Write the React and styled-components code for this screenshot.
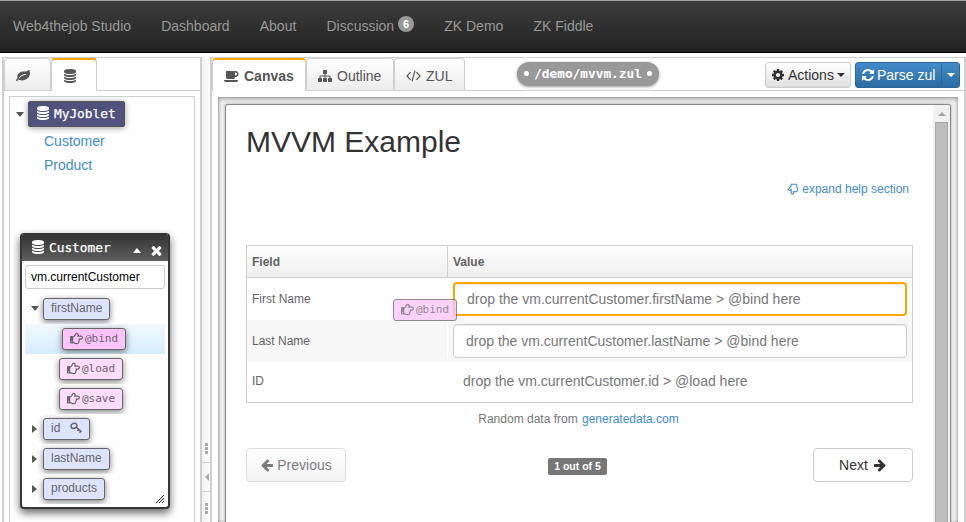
import React from "react";
import styled, { createGlobalStyle, css } from "styled-components";
import { FaRegHandPointRight } from "react-icons/fa";

const sans = `"Liberation Sans", Arial, sans-serif`;
const mono = `"DejaVu Sans Mono", monospace`;

const GlobalStyle = createGlobalStyle`
  *, *::before, *::after { box-sizing: border-box; }
  body { margin: 0; background: #fff; font-family: ${sans}; overflow: hidden; }
  a { color: #428bca; text-decoration: none; }
`;

/* ---------- icons ---------- */
const PATHS = {
  database:
    "M896 768q237 0 443-43t325-127v170q0 69-103 128t-280 93.5-385 34.5-385-34.5-280-93.5-103-128v-170q119 84 325 127t443 43zm0 768q237 0 443-43t325-127v170q0 69-103 128t-280 93.5-385 34.5-385-34.5-280-93.5-103-128v-170q119 84 325 127t443 43zm0-384q237 0 443-43t325-127v170q0 69-103 128t-280 93.5-385 34.5-385-34.5-280-93.5-103-128v-170q119 84 325 127t443 43zm0-1152q208 0 385 34.5t280 93.5 103 128v128q0 69-103 128t-280 93.5-385 34.5-385-34.5-280-93.5-103-128v-128q0-69 103-128t280-93.5 385-34.5z",
  leaf:
    "M1280 704q0-26-19-45t-45-19q-172 0-318 49.5t-259.5 134-235.5 219.5q-19 21-19 45 0 26 19 45t45 19q24 0 45-19 27-24 74-71t67-66q137-124 268.5-176t313.5-52q26 0 45-19t19-45zm512-198q0 95-20 193-46 224-184.5 383t-357.5 268q-214 108-438 108-148 0-286-47-15-5-88-42t-96-37q-16 0-39.5 32t-45 70-52.5 70-60 32q-43 0-63.5-17.5t-45.5-59.5q-2-4-6-11t-5.5-10-3-9.5-1.5-13.5q0-35 31-73.5t68-65.5 68-56 31-48q0-4-14-38t-16-44q-9-51-9-104 0-115 43.5-220t119-184.5 170.5-139 204-95.5q55-18 145-25.5t179.5-9 178.5-6 163.5-24 113.5-56.5l29.5-29.5 29.5-28 27-20 36.5-16 43.5-4.5q39 0 70.5 46t47.5 112 24 124 8 96z",
  coffee:
    "M1664 640q0-80-56-136t-136-56h-64v384h64q80 0 136-56t56-136zm-1664 768h1792q0 106-75 181t-181 75h-1280q-106 0-181-75t-75-181zm1856-768q0 159-112.5 271.5t-271.5 112.5h-64v32q0 92-66 158t-158 66h-704q-92 0-158-66t-66-158v-736q0-26 19-45t45-19h1152q159 0 271.5 112.5t112.5 271.5z",
  left:
    "M1664 896v128q0 53-32.5 90.5t-84.5 37.5h-704l293 294q38 36 38 90t-38 90l-75 76q-37 37-90 37-52 0-91-37l-651-652q-37-37-37-90 0-52 37-91l651-650q38-38 91-38 52 0 90 38l75 74q38 38 38 91t-38 91l-293 293h704q52 0 84.5 37.5t32.5 90.5z",
  right:
    "M1600 960q0 54-37 91l-651 651q-39 37-91 37-51 0-90-37l-75-75q-38-38-38-91t38-91l293-293h-704q-52 0-84.5-37.5t-32.5-90.5v-128q0-53 32.5-90.5t84.5-37.5h704l-293-294q-38-36-38-90t38-90l75-75q38-38 90-38 53 0 91 38l651 651q37 35 37 90z",
  refresh:
    "M1639 1056q0 5-1 7-64 268-268 434.5t-478 166.5q-146 0-282.5-55t-243.5-157l-129 129q-19 19-45 19t-45-19-19-45v-448q0-26 19-45t45-19h448q26 0 45 19t19 45-19 45l-137 137q71 66 161 102t187 36q134 0 250-65t186-179q11-17 53-117 8-23 30-23h192q13 0 22.5 9.5t9.5 22.5zm25-800v448q0 26-19 45t-45 19h-448q-26 0-45-19t-19-45 19-45l138-138q-148-137-349-137-134 0-250 65t-186 179q-11 17-53 117-8 23-30 23h-199q-13 0-22.5-9.5t-9.5-22.5v-7q65-268 270-434.5t480-166.5q146 0 284 55.5t245 156.5l130-129q19-19 45-19t45 19 19 45z",
  times:
    "M1490 1322q0 40-28 68l-136 136q-28 28-68 28t-68-28l-294-294-294 294q-28 28-68 28t-68-28l-136-136q-28-28-28-68t28-68l294-294-294-294q-28-28-28-68t28-68l136-136q28-28 68-28t68 28l294 294 294-294q28-28 68-28t68 28l136 136q28 28 28 68t-28 68l-294 294 294 294q28 28 28 68z",
  cog:
    "M1152 896q0-106-75-181t-181-75-181 75-75 181 75 181 181 75 181-75 75-181zm512-109v222q0 12-8 23t-20 13l-185 28q-19 54-39 91 35 50 107 138 10 12 10 25t-9 23q-27 37-99 108t-94 71q-12 0-26-9l-138-108q-44 23-91 38-16 136-29 186-7 28-36 28h-222q-14 0-24.5-8.5t-11.5-21.5l-28-184q-49-16-90-37l-141 107q-10 9-25 9-14 0-25-11-126-114-165-168-7-10-7-23 0-12 8-23 15-21 51-66.5t54-70.5q-27-50-41-99l-183-27q-13-2-21-12.5t-8-23.5v-222q0-12 8-23t19-13l186-28q14-46 39-92-40-57-107-138-10-12-10-24 0-10 9-23 26-36 98.5-107.5t94.5-71.5q13 0 26 10l138 107q44-23 91-38 16-136 29-186 7-28 36-28h222q14 0 24.5 8.5t11.5 21.5l28 184q49 16 90 37l142-107q9-9 24-9 13 0 25 10 129 119 165 170 7 8 7 22 0 12-8 23-15 21-51 66.5t-54 70.5q26 50 41 98l183 28q13 2 21 12.5t8 23.5z",
  sitemap:
    "M1792 1248v320q0 40-28 68t-68 28h-320q-40 0-68-28t-28-68v-320q0-40 28-68t68-28h96v-192h-512v192h96q40 0 68 28t28 68v320q0 40-28 68t-68 28h-320q-40 0-68-28t-28-68v-320q0-40 28-68t68-28h96v-192h-512v192h96q40 0 68 28t28 68v320q0 40-28 68t-68 28h-320q-40 0-68-28t-28-68v-320q0-40 28-68t68-28h96v-192q0-52 38-90t90-38h512v-192h-96q-40 0-68-28t-28-68v-320q0-40 28-68t68-28h320q40 0 68 28t28 68v320q0 40-28 68t-68 28h-96v192h512q52 0 90 38t38 90v192h96q40 0 68 28t28 68z",
};

const Svg = styled.svg`
  display: block;
  flex: none;
`;
const Icon = ({ name, size = 14, box = 1792 }) => (
  <Svg width={(size * box) / 1792} height={size} viewBox={`0 0 ${box} 1792`} fill="currentColor">
    <path d={PATHS[name]} />
  </Svg>
);
const CodeIcon = () => (
  <Svg width="15" height="14" viewBox="0 0 15 14" fill="none" stroke="currentColor" strokeWidth="1.2">
    <path d="M4.6 3.2 1 7l3.6 3.8M10.4 3.2 14 7l-3.6 3.8M9 1.6 6 12.4" />
  </Svg>
);
const KeyIcon = () => (
  <Svg width="13" height="12" viewBox="0 0 13 12" fill="none" stroke="currentColor" strokeWidth="1.5">
    <ellipse cx="4" cy="3.8" rx="3" ry="2.4" transform="rotate(-25 4 3.8)" />
    <path d="M6.4 5.2 11.6 9.8M8.8 7.2 7.6 9.2M10.8 8.8 9.6 10.8" />
  </Svg>
);
const HelpHand = () => (
  <Svg width="12" height="12" viewBox="0 0 12 12" fill="none" stroke="currentColor" strokeWidth="1.1">
    <path d="M4 1.2h6M4 1.5v2L1.2 6.2l1 1.2 2-1v4l1.4.8 1-.8V8.6l3 .2 1.2-1.6L9.8 4V1.5" />
  </Svg>
);

const Caret = styled.span`
  flex: none;
  width: 0;
  height: 0;
  ${({ $dir = "down", $tall = 4 }) =>
    $dir === "down"
      ? css`border: 4px solid transparent; border-bottom: 0; border-top: ${$tall}px solid currentColor;`
      : $dir === "up"
      ? css`border: 4px solid transparent; border-top: 0; border-bottom: ${$tall}px solid currentColor;`
      : $dir === "right"
      ? css`border: 4px solid transparent; border-right: 0; border-left: 5px solid currentColor;`
      : css`border: 4px solid transparent; border-left: 0; border-right-color: currentColor;`}
`;

/* ---------- frame ---------- */
const Page = styled.div`
  width: 966px;
  height: 522px;
  overflow: hidden;
  display: flex;
  flex-direction: column;
`;
const Navbar = styled.nav`
  flex: none;
  height: 53px;
  border-top: 1px solid #a2a2a2;
  border-bottom: 1px solid #000;
  background: linear-gradient(#3c3c3c, #222);
  display: flex;
  align-items: center;
  gap: 30.1px;
  padding: 0 13px 2px;
  color: #999;
  font-size: 14px;
`;
const NavItem = styled.span`
  display: flex;
  gap: 4px;
  line-height: 20px;
`;
const Badge = styled.span`
  height: 16px;
  width: 16px;
  border-radius: 8px;
  background: #999;
  color: #fff;
  font: bold 11px/16px ${sans};
  text-align: center;
`;
const Workspace = styled.div`
  flex: 1;
  min-height: 0;
  display: flex;
  padding: 4px 0 0 2px;
`;
const Pane = styled.section`
  flex: ${({ $w }) => ($w ? `0 0 ${$w}px` : "1")};
  display: flex;
  flex-direction: column;
  min-width: 0;
  border: solid #cfcfcf;
  border-width: 1px 2px 0;
`;
const TabBar = styled.header`
  flex: none;
  height: 33px;
  display: flex;
  border-bottom: 1px solid #cfcfcf;
`;
const Tab = styled.div`
  width: ${({ $w }) => $w}px;
  height: ${({ $on }) => ($on ? 33 : 32)}px;
  border: 1px solid #cfcfcf;
  border-bottom: 0;
  border-radius: 4px 4px 0 0;
  background: linear-gradient(#fefefe, #ececec);
  color: #555;
  font-size: 14px;
  display: flex;
  align-items: center;
  padding: 3px 0 0 ${({ $pl = 11 }) => $pl}px;
  gap: 5px;
  ${({ $on }) => $on && css`
    background: #fff;
    border-top: 2px solid #ffa500;
    padding-top: 1px;
    font-weight: bold;
  `}
`;

/* ---------- left pane ---------- */
const TreeBox = styled.div`
  flex: 1;
  margin: 5px 5px 0 5px;
  border: 1px solid #cfcfcf;
  border-bottom: 0;
  font-size: 14px;
`;
const Root = styled.div`
  display: flex;
  align-items: center;
  gap: 4px;
  padding: 4px 0 0 6px;
  color: #555;
`;
const RootChip = styled.span`
  display: flex;
  align-items: center;
  gap: 4px;
  width: 97px;
  height: 26px;
  padding: 0 0 2px 7px;
  border: 1px solid #555;
  border-radius: 2px;
  background: #50527e;
  box-shadow: 0 1px 6px rgba(0, 0, 0, 0.4);
  color: #fff;
  font: 12.8px ${mono};
  -webkit-text-stroke: 0.25px;
`;
const Leaf = styled.a`
  display: block;
  height: 24px;
  line-height: 24px;
  padding-left: 34px;
`;
const Leaves = styled.div`
  padding-top: 2px;
`;

/* ---------- splitter ---------- */
const Splitter = styled.div`
  flex: 0 0 8px;
  display: flex;
  flex-direction: column;
  justify-content: flex-end;
  align-items: center;
  background: linear-gradient(90deg, #f1f1f1, #fdfdfd);
  color: #aaa;
`;
const Grip = styled.span`
  display: grid;
  gap: 1px;
  margin: ${({ $m }) => $m};
  i { width: 3px; height: 3px; background: #aaa; }
`;
const Collapse = styled.span`
  width: 8px;
  height: 30px;
  border: solid #cfcfcf;
  border-width: 1px 0;
  display: flex;
  align-items: center;
  justify-content: flex-end;
  padding-right: 1px;
`;

/* ---------- right pane ---------- */
const PathPill = styled.span`
  width: 142px;
  height: 24px;
  margin: 4px 0 0 52px;
  padding-bottom: 1px;
  border-radius: 12px;
  background: #999;
  box-shadow: 0 1px 3px rgba(0, 0, 0, 0.4);
  color: #fff;
  font: bold 12.8px ${mono};
  display: flex;
  align-items: center;
  justify-content: center;
  gap: 5px;
  &::before, &::after { content: ""; width: 5px; height: 5px; border-radius: 50%; background: #fff; }
`;
const Actions = styled.div`
  margin: 4px 4px 0 auto;
  display: flex;
  gap: 4px;
`;
const ToolButton = styled.button`
  display: flex;
  align-items: center;
  gap: ${({ $gap = 3 }) => $gap}px;
  width: ${({ $w }) => $w}px;
  height: 26px;
  padding: 0 0 0 5px;
  font: 14px ${sans};
  white-space: nowrap;
  border: 1px solid #ccc;
  border-radius: 3px;
  background: linear-gradient(#fff, #e0e0e0);
  color: #333;
  ${({ $primary }) => $primary && css`
    border-color: #2b669a;
    border-radius: 3px 0 0 3px;
    background: linear-gradient(#428bca, #2d6ca2);
    color: #fff;
  `}
`;
const SplitToggle = styled(ToolButton)`
  margin-left: -5px;
  border-radius: 0 3px 3px 0;
`;
const Well = styled.div`
  flex: 1;
  min-height: 0;
  margin: 6px 6px 0 6px;
  padding: 7px 7px 0;
  background: #efefef;
  box-shadow: inset 0 2px 4px rgba(0, 0, 0, 0.3), inset 1px 0 2px rgba(0, 0, 0, 0.2), inset -1px 0 2px rgba(0, 0, 0, 0.12);
  display: flex;
`;
const Sheet = styled.div`
  flex: 1;
  display: flex;
  border: 1px solid #888;
  border-bottom: 0;
  border-radius: 3px 3px 0 0;
  box-shadow: 0 0 3px rgba(0, 0, 0, 0.3);
  background: #fff;
  overflow: hidden;
`;
const Content = styled.main`
  flex: 1;
  padding: 17px 20px 0;
`;
const Title = styled.h1`
  margin: 0;
  height: 40px;
  font: 30px/40px ${sans};
  color: #333;
`;
const HelpLink = styled.a`
  display: flex;
  justify-content: flex-end;
  align-items: center;
  gap: 3px;
  height: 18px;
  margin: 18px 4px 47px 0;
  font-size: 12px;
`;
const Scrollbar = styled.div`
  flex: 0 0 17px;
  display: flex;
  flex-direction: column;
  align-items: center;
  background: #f1f1f1;
  color: #a3a3a3;
  padding-top: 7px;
`;
const Thumb = styled.span`
  flex: 1;
  width: 13px;
  margin: 6px 1px 0 0;
  border: 1px solid #a8a8a8;
  border-bottom: 0;
  background: #bcbcbc;
`;

const Table = styled.div`
  border: 1px solid #cfcfcf;
  font-size: 12px;
  color: #636363;
`;
const Row = styled.div`
  display: grid;
  grid-template-columns: 200px 1fr;
  align-items: center;
  height: ${({ $h = 42 }) => $h}px;
  padding-bottom: ${({ $pb = 0 }) => $pb}px;
  background: ${({ $alt }) => ($alt ? "#f7f7f7" : "#fff")};
  > * { padding-left: 5px; }
  > * + * { border-left: 1px solid #fff; }
`;
const HeadRow = styled(Row)`
  background: linear-gradient(#fefefe, #eee);
  border-bottom: 1px solid #cfcfcf;
  font-weight: bold;
  align-items: stretch;
  line-height: 32px;
  > * + * { border-left-color: #cfcfcf; }
`;
const Cell = styled.div``;
const Field = styled.div`
  margin-right: 5px;
  height: 34px;
  border: 1px solid #ccc;
  border-radius: 4px;
  background: #fff;
  box-shadow: inset 0 1px 1px rgba(0, 0, 0, 0.075);
  padding-left: 12px;
  font-size: 14px;
  line-height: 32px;
  color: #777;
  ${({ $target }) => $target && css`border: 2px solid #ffa500; line-height: 30px;`}
`;
const Plain = styled.span`
  padding-left: 10px;
  font-size: 14px;
  color: #777;
`;
const Credit = styled.p`
  margin: 7px 2px 20px 0;
  text-align: center;
  font-size: 12px;
  line-height: 18px;
  color: #777;
  a { margin-left: 1px; }
`;
const Pager = styled.footer`
  display: flex;
  align-items: center;
  justify-content: space-between;
`;
const PageButton = styled.button`
  display: flex;
  align-items: center;
  justify-content: center;
  gap: ${({ $off }) => ($off ? 3 : 5)}px;
  width: 100px;
  height: 34px;
  border: 1px solid #ccc;
  border-radius: 4px;
  background: #fff;
  font: 14px ${sans};
  color: #333;
  ${({ $off }) => $off && css`
    opacity: 0.65;
    background: linear-gradient(#fff, #eee);
  `}
`;
const PageLabel = styled.span`
  width: 59px;
  height: 17px;
  margin: 2px 4px 0 0;
  border-radius: 2px;
  background: #777;
  color: #fff;
  font: bold 10.5px/17px ${sans};
  text-align: center;
`;

/* ---------- floating property window ---------- */
const Floating = styled.aside`
  position: absolute;
  left: 20px;
  top: 233px;
  width: 150px;
  height: 276px;
  border: 2px solid #363636;
  border-top: 0;
  border-radius: 4px;
  background: #fff;
  box-shadow: 0 4px 9px rgba(0, 0, 0, 0.6);
  overflow: hidden;
`;
const FloatHead = styled.div`
  height: 28px;
  padding: 0 4px 0 9px;
  display: flex;
  align-items: center;
  gap: 4px;
  background: linear-gradient(#333, #5d5d5d);
  color: #fff;
  font: 12.8px ${mono};
  -webkit-text-stroke: 0.25px;
`;
const HeadTools = styled.span`
  margin: 6px 0 0 auto;
  display: flex;
  align-items: center;
  gap: 8px;
`;
const NameField = styled.div`
  margin: 4px 3px 5px;
  height: 24px;
  border: 1px solid #ccc;
  border-radius: 3px;
  padding-left: 5px;
  font-size: 12px;
  line-height: 23px;
  color: #000;
`;
const Item = styled.div`
  height: 30px;
  margin: 0 3px;
  padding: 4px 0 0 ${({ $pl = 4 }) => $pl}px;
  display: flex;
  align-items: flex-start;
  gap: ${({ $gap = 4 }) => $gap}px;
  color: #555;
  overflow: hidden;
  ${({ $on }) => $on && css`background: linear-gradient(#f0f9fe, #d5edfa);`}
  > ${Caret} { margin-top: ${({ $open }) => ($open ? 8 : 7)}px; }
`;
const Chip = styled.span`
  display: flex;
  align-items: center;
  gap: 3px;
  width: ${({ $w = 64 }) => $w}px;
  height: 22px;
  padding: 0 0 2px 7px;
  border: 1px solid #666;
  border-radius: 3px;
  background: ${({ $bg = "#dde4ff" }) => $bg};
  box-shadow: 0 2px 6px rgba(0, 0, 0, 0.5);
  color: #666;
  font: 12px ${sans};
`;
const KeySlot = styled.span`
  margin-left: 7px;
`;
const BindChip = styled(Chip)`
  gap: 2px;
  font: 11px ${mono};
`;
const DragGhost = styled(BindChip)`
  position: absolute;
  left: 393px;
  top: 299px;
  opacity: 0.75;
  box-shadow: none;
`;
const Resize = styled.span`
  position: absolute;
  right: 4px;
  bottom: 4px;
  color: #222;
`;

const Gripper = ({ m }) => <Grip $m={m}><i /><i /><i /></Grip>;
const Binding = ({ as: C = BindChip, label, bg }) => (
  <C $bg={bg}><FaRegHandPointRight size={13} />{label}</C>
);
const Closed = ({ w, children }) => (
  <Item $pl={7} $gap={6}><Caret $dir="right" /><Chip $w={w}>{children}</Chip></Item>
);

export default function App() {
  return (
    <Page>
      <GlobalStyle />
      <Navbar>
        <NavItem>Web4thejob Studio</NavItem>
        <NavItem>Dashboard</NavItem>
        <NavItem>About</NavItem>
        <NavItem>Discussion <Badge>6</Badge></NavItem>
        <NavItem>ZK Demo</NavItem>
        <NavItem>ZK Fiddle</NavItem>
      </Navbar>

      <Workspace>
        <Pane $w={200}>
          <TabBar>
            <Tab $w={47}><Icon name="leaf" /></Tab>
            <Tab $w={46} $on><Icon name="database" /></Tab>
          </TabBar>
          <TreeBox>
            <Root>
              <Caret $tall={5} />
              <RootChip><Icon name="database" />MyJoblet</RootChip>
            </Root>
            <Leaves>
              <Leaf>Customer</Leaf>
              <Leaf>Product</Leaf>
            </Leaves>
          </TreeBox>
        </Pane>

        <Splitter>
          <Gripper m="0 0 8px 1px" />
          <Collapse><Caret $dir="left" /></Collapse>
          <Gripper m="11px 0 8px 1px" />
        </Splitter>

        <Pane>
          <TabBar>
            <Tab $w={94} $on><Icon name="coffee" box={1920} />Canvas</Tab>
            <Tab $w={88}><Icon name="sitemap" />Outline</Tab>
            <Tab $w={71}><CodeIcon />ZUL</Tab>
            <PathPill>/demo/mvvm.zul</PathPill>
            <Actions>
              <ToolButton $w={86}><Icon name="cog" />Actions<Caret /></ToolButton>
              <ToolButton $w={87} $gap={2} $primary><Icon name="refresh" />Parse zul</ToolButton>
              <SplitToggle $w={19} $primary><Caret /></SplitToggle>
            </Actions>
          </TabBar>
          <Well>
            <Sheet>
              <Content>
                <Title>MVVM Example</Title>
                <HelpLink><HelpHand />expand help section</HelpLink>
                <Table>
                  <HeadRow $h={32}><Cell>Field</Cell><Cell>Value</Cell></HeadRow>
                  <Row>
                    <Cell>First Name</Cell>
                    <Cell><Field $target>drop the vm.currentCustomer.firstName &gt; @bind here</Field></Cell>
                  </Row>
                  <Row $alt>
                    <Cell>Last Name</Cell>
                    <Cell><Field>drop the vm.currentCustomer.lastName &gt; @bind here</Field></Cell>
                  </Row>
                  <Row $h={40} $pb={2}>
                    <Cell>ID</Cell>
                    <Cell><Plain>drop the vm.currentCustomer.id &gt; @load here</Plain></Cell>
                  </Row>
                </Table>
                <Credit>Random data from <a>generatedata.com</a></Credit>
                <Pager>
                  <PageButton $off><Icon name="left" />Previous</PageButton>
                  <PageLabel>1 out of 5</PageLabel>
                  <PageButton>Next<Icon name="right" /></PageButton>
                </Pager>
              </Content>
              <Scrollbar><Caret $dir="up" /><Thumb /></Scrollbar>
            </Sheet>
          </Well>
        </Pane>
      </Workspace>

      <Floating>
        <FloatHead>
          <Icon name="database" />Customer
          <HeadTools><Caret $dir="up" $tall={5} /><Icon name="times" size={15} /></HeadTools>
        </FloatHead>
        <NameField>vm.currentCustomer</NameField>
        <Item $open $pl={6}><Caret $tall={5} /><Chip $w={67}>firstName</Chip></Item>
        <Item $on $pl={37}><Binding label="@bind" bg="#fcc4fc" /></Item>
        <Item $pl={34}><Binding label="@load" bg="#fddcfd" /></Item>
        <Item $pl={34}><Binding label="@save" bg="#fddcfd" /></Item>
        <Closed w={47}>id<KeySlot><KeyIcon /></KeySlot></Closed>
        <Closed w={67}>lastName</Closed>
        <Closed w={62}>products</Closed>
        <Resize>
          <Svg width="8" height="8" viewBox="0 0 8 8" stroke="currentColor" strokeWidth="1">
            <path d="M0 8 8 0M3 8 8 3M6 8 8 6" />
          </Svg>
        </Resize>
      </Floating>
      <Binding as={DragGhost} label="@bind" bg="#fcc4fc" />
    </Page>
  );
}
